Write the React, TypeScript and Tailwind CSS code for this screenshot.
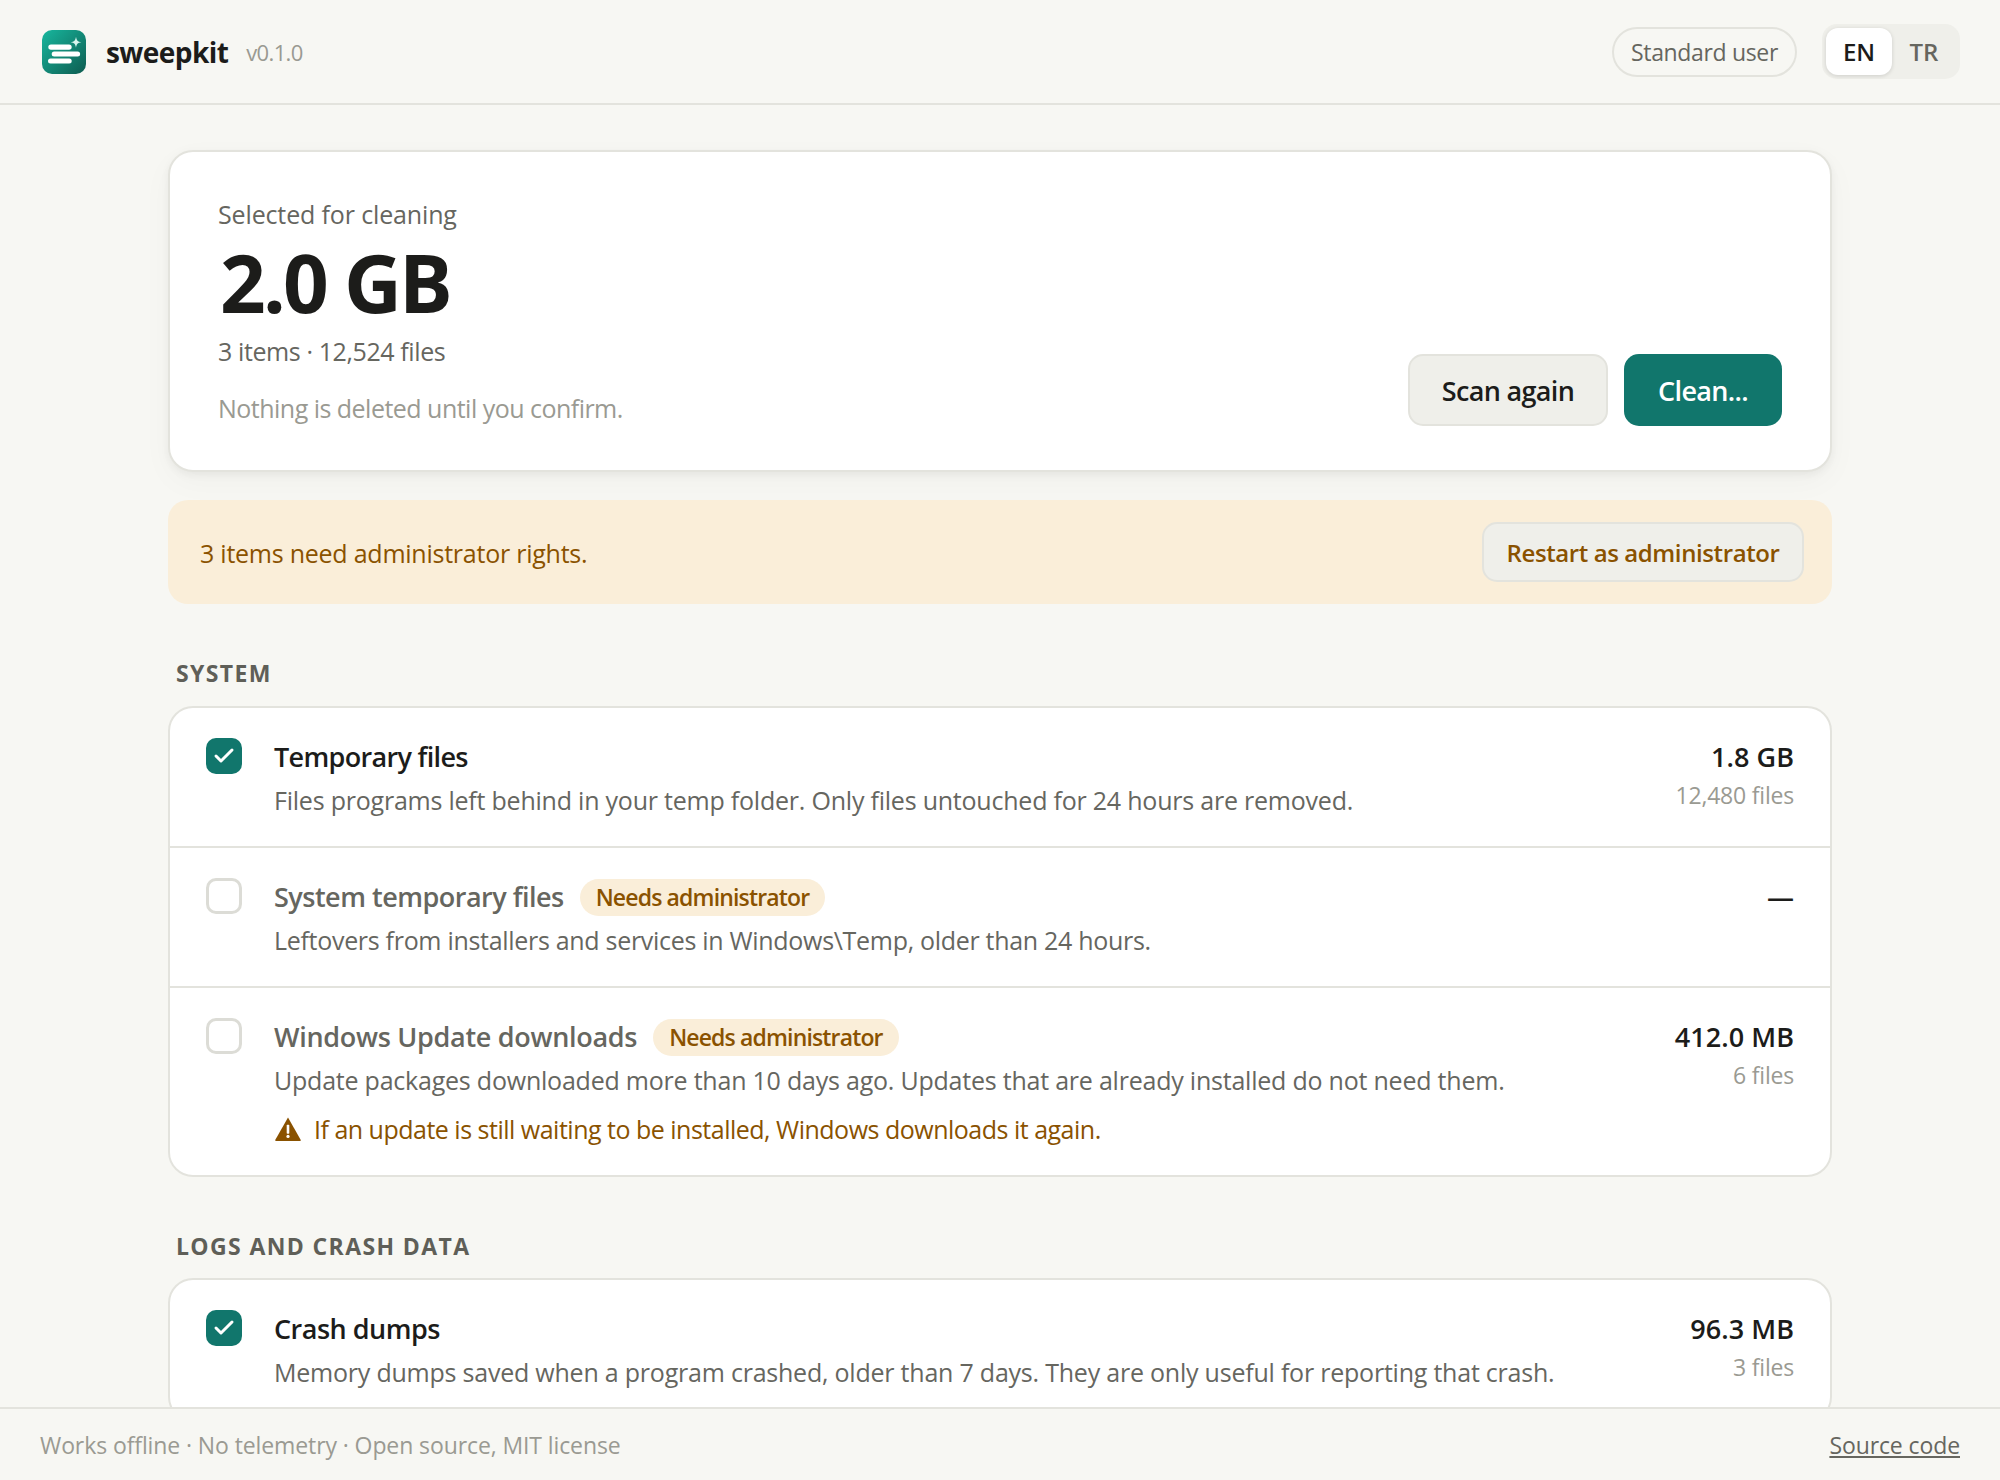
import React from 'react';
import { Check } from 'lucide-react';

interface RowProps {
  title: string;
  titleClass?: string;
  desc: string;
  descClass?: string;
  size: string;
  files?: string;
  checked?: boolean;
  admin?: boolean;
  warning?: string;
  last?: boolean;
}

function Logo() {
  return (
    <svg width="44" height="44" viewBox="0 0 44 44" className="shrink-0">
      <defs>
        <linearGradient id="logoFill" x1="0" y1="0" x2="1" y2="1">
          <stop offset="0" stopColor="#17b79e" />
          <stop offset="1" stopColor="#0e5c50" />
        </linearGradient>
      </defs>
      <rect width="44" height="44" rx="10" fill="url(#logoFill)" />
      <rect x="6.3" y="14.4" width="23.4" height="5.4" rx="2.7" fill="#fff" />
      <rect x="9.7" y="21.6" width="28.4" height="5" rx="2.5" fill="#fff" />
      <rect x="6" y="28.4" width="23.7" height="5" rx="2.5" fill="#fff" />
      <path d="M34 6.8 C34.6 10.6 35.6 11.6 39.4 12.3 C35.6 13 34.6 14 34 17.8 C33.4 14 32.4 13 28.6 12.3 C32.4 11.6 33.4 10.6 34 6.8Z" fill="#d8f5ee" />
    </svg>
  );
}

function WarningIcon() {
  return (
    <svg width="26" height="24" viewBox="0 0 24 23" preserveAspectRatio="none" className="shrink-0 ml-[1px] mb-[2px]">
      <path d="M12 0.5 L23.8 22 Q24 23 23 23 L1 23 Q0 23 0.2 22 Z" fill="#8a5200" />
      <rect x="10.8" y="7.5" width="2.4" height="8.5" rx="0.6" fill="#fff" />
      <circle cx="12" cy="18.6" r="1.5" fill="#fff" />
    </svg>
  );
}

function Row({ title, titleClass = 'tracking-[-0.5px]', desc, descClass = 'tracking-[-0.22px]', size, files, checked, admin, warning, last }: RowProps) {
  return (
    <div className={`flex pl-[36px] pr-[36px] pt-[30px] ${warning ? 'pb-[27px]' : 'pb-[28px]'} ${last ? '' : 'border-b-2 border-[#e3e3dd]'}`}>
      {checked ? (
        <div className="w-[36px] h-[36px] shrink-0 rounded-[10px] bg-[#11766c] flex items-center justify-center">
          <Check className="w-[24px] h-[24px] text-white" strokeWidth={3} />
        </div>
      ) : (
        <div className="w-[36px] h-[36px] shrink-0 rounded-[10px] bg-white border-[3px] border-[#dcdcd6]" />
      )}
      <div className="ml-[32px] flex-1">
        <div className="flex items-center h-[38px]">
          <span className={`text-[27px] font-semibold ${titleClass} ${checked ? 'text-[#1c1c1a]' : 'text-[#66665f]'}`}>{title}</span>
          {admin && (
            <span className="ml-[16px] h-[37px] px-[16px] rounded-full bg-[#faeed9] text-[#8a5200] text-[23px] font-semibold tracking-[-0.85px] flex items-center">
              Needs administrator
            </span>
          )}
        </div>
        <div className={`mt-[6px] h-[36px] leading-[36px] text-[25px] text-[#66665f] ${descClass}`}>{desc}</div>
        {warning && (
          <div className="mt-[14px] h-[36px] flex items-center text-[#8a5200] text-[25px] tracking-[-0.5px]">
            <WarningIcon />
            <span className="ml-[13px]">{warning}</span>
          </div>
        )}
      </div>
      <div className="text-right">
        <div className="h-[38px] leading-[38px] text-[27px] font-semibold tracking-[0.05px] text-[#1c1c1a]">{size}</div>
        {files && <div className="h-[38px] leading-[38px] text-[23px] tracking-[-0.2px] text-[#9a9a92]">{files}</div>}
      </div>
    </div>
  );
}

export default function App() {
  return (
    <div className="h-screen flex flex-col bg-[#f7f7f3] overflow-hidden font-['Open_Sans','Noto_Sans',sans-serif]">
      <header className="h-[105px] shrink-0 border-b-2 border-[#e3e3dd] flex items-center pl-[42px] pr-[40px]">
        <Logo />
        <span className="ml-[20px] text-[28px] font-bold tracking-[-0.02em] text-[#1c1c1a]">sweepkit</span>
        <span className="ml-[18px] mt-[1px] text-[22px] tracking-[-0.03em] text-[#9a9a92]">v0.1.0</span>
        <div className="ml-auto flex items-center">
          <div className="h-[50px] w-[185px] pt-[1px] rounded-full border-2 border-[#e3e3dd] flex items-center justify-center text-[23px] tracking-[-0.015em] text-[#66665f]">
            Standard user
          </div>
          <div className="ml-[25px] h-[55px] w-[138px] rounded-[15px] bg-[#efefea] p-[4px] flex">
            <div className="w-[66px] rounded-[12px] bg-white shadow-[0_1px_4px_rgba(0,0,0,0.14)] flex items-center justify-center text-[24px] font-semibold text-[#1c1c1a]">EN</div>
            <div className="flex-1 flex items-center justify-center text-[24px] font-semibold text-[#66665f]">TR</div>
          </div>
        </div>
      </header>

      <main className="flex-1 min-h-0 overflow-hidden">
        <div className="w-[1664px] mx-auto pt-[45px]">
          <section className="h-[322px] bg-white border-2 border-[#e3e3dd] rounded-[25px] shadow-[0_3px_8px_rgba(0,0,0,0.05),0_10px_32px_rgba(0,0,0,0.03)] flex justify-between items-end pl-[48px] pr-[48px] pb-[44px]">
            <div>
              <div className="h-[36px] leading-[36px] text-[25px] tracking-[-0.14px] text-[#66665f]">Selected for cleaning</div>
              <div className="h-[90px] mt-[5px] pl-[2px] leading-[90px] text-[80px] font-bold tracking-[-0.035em] text-[#1c1c1a]">2.0 GB</div>
              <div className="mt-[6px] h-[36px] leading-[36px] text-[25px] tracking-[-0.4px] text-[#66665f]">3 items · 12,524 files</div>
              <div className="mt-[21px] h-[36px] leading-[36px] text-[25px] tracking-[-0.52px] text-[#9a9a92]">Nothing is deleted until you confirm.</div>
            </div>
            <div className="flex gap-[16px]">
              <button className="h-[72px] w-[200px] pt-[2px] rounded-[15px] bg-[#efefea] border-2 border-[#e3e3dd] text-[27px] font-semibold tracking-[-0.025em] text-[#1c1c1a]">Scan again</button>
              <button className="h-[72px] w-[158px] pt-[2px] rounded-[15px] bg-[#11766c] text-[27px] font-semibold tracking-[-0.025em] text-white">Clean...</button>
            </div>
          </section>

          <div className="mt-[28px] h-[104px] rounded-[20px] bg-[#faeed9] flex items-center justify-between pl-[32px] pr-[28px]">
            <span className="mt-[4px] text-[25px] tracking-[-0.24px] text-[#8a5200]">3 items need administrator rights.</span>
            <button className="h-[60px] w-[322px] pt-[2px] rounded-[15px] bg-[#efefea] border-2 border-[#e3e3dd] text-[24px] font-semibold tracking-[-0.4px] text-[#8a5200]">Restart as administrator</button>
          </div>

          <h2 className="mt-[55px] mb-[19px] pl-[8px] h-[28px] leading-[28px] text-[23px] font-bold tracking-[0.06em] text-[#5f5f58]">SYSTEM</h2>
          <div className="bg-white border-2 border-[#e3e3dd] rounded-[25px]">
            <Row checked title="Temporary files" titleClass="tracking-[-0.67px]" desc="Files programs left behind in your temp folder. Only files untouched for 24 hours are removed." size="1.8 GB" files="12,480 files" />
            <Row admin title="System temporary files" desc="Leftovers from installers and services in Windows\Temp, older than 24 hours." descClass="tracking-[-0.3px]" size="—" />
            <Row admin last title="Windows Update downloads" titleClass="tracking-[-0.3px]" desc="Update packages downloaded more than 10 days ago. Updates that are already installed do not need them." size="412.0 MB" files="6 files" warning="If an update is still waiting to be installed, Windows downloads it again." />
          </div>

          <h2 className="mt-[55px] mb-[18px] pl-[8px] h-[28px] leading-[28px] text-[23px] font-bold tracking-[0.06em] text-[#5f5f58]">LOGS AND CRASH DATA</h2>
          <div className="bg-white border-2 border-[#e3e3dd] rounded-[25px]">
            <Row checked title="Crash dumps" desc="Memory dumps saved when a program crashed, older than 7 days. They are only useful for reporting that crash." size="96.3 MB" files="3 files" />
          </div>
        </div>
      </main>

      <footer className="h-[73px] shrink-0 border-t-2 border-[#e3e3dd] bg-[#f7f7f3] flex items-center justify-between pl-[40px] pr-[40px] pt-[2px]">
        <span className="text-[23px] tracking-[-0.1px] text-[#9a9a92]">Works offline · No telemetry · Open source, MIT license</span>
        <a className="text-[23px] tracking-[-0.1px] text-[#66665f] underline">Source code</a>
      </footer>
    </div>
  );
}
